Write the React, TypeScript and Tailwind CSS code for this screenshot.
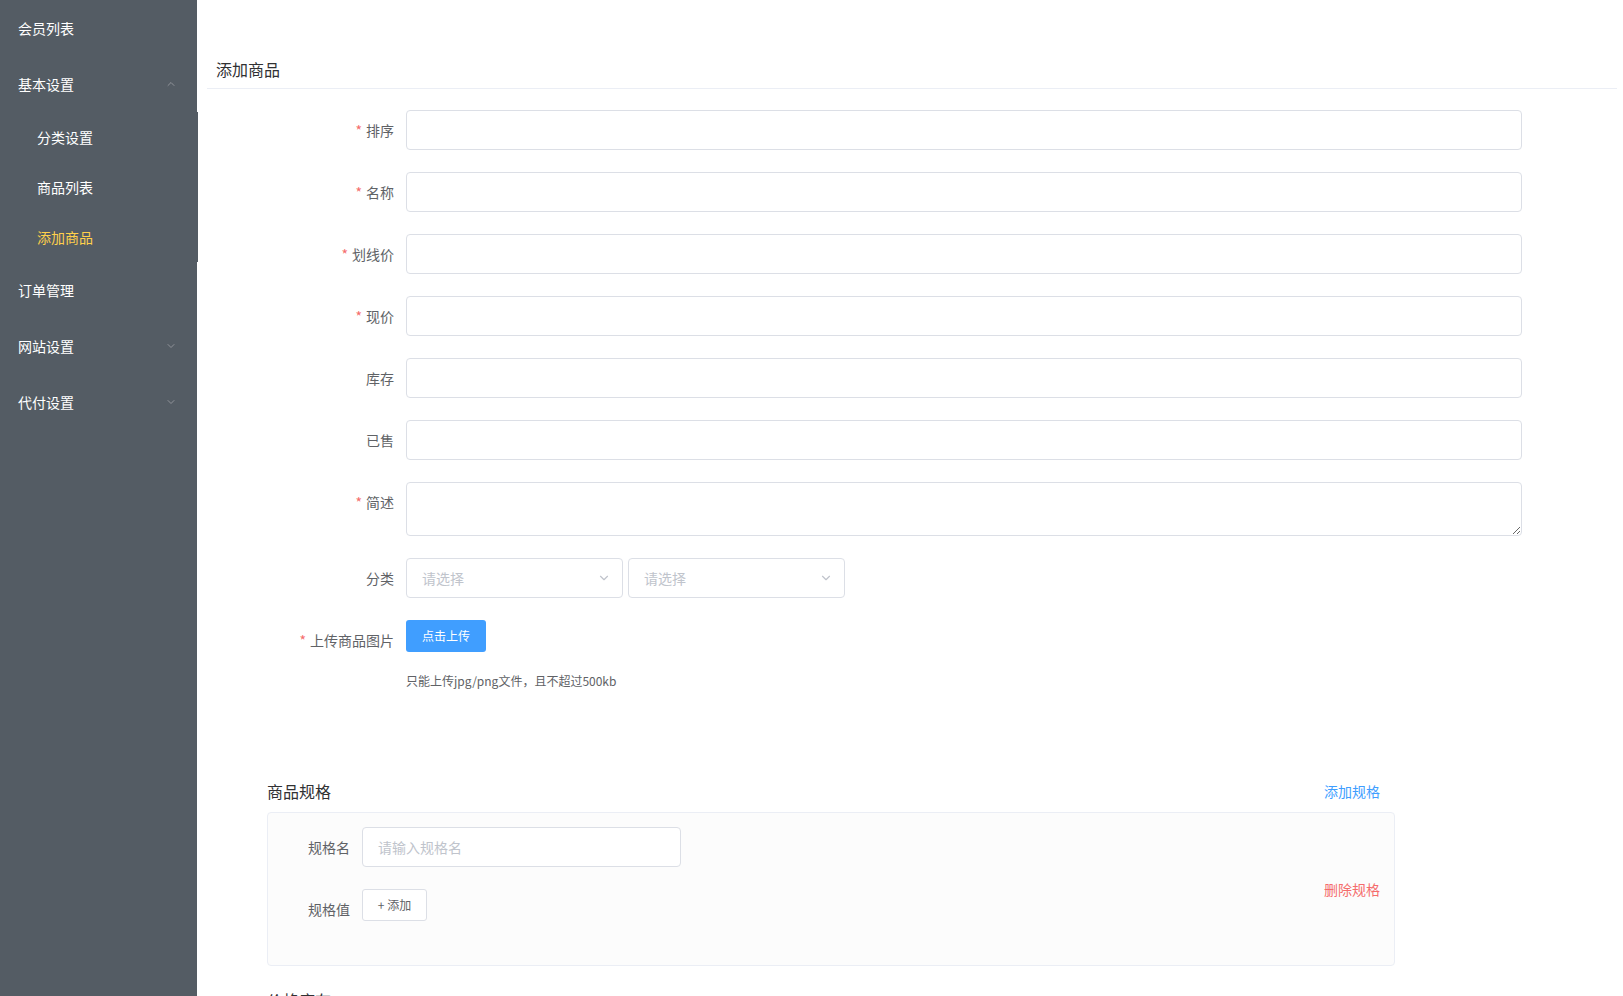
import { ChevronDown, ChevronUp } from 'lucide-react';

const font = { fontFamily: '"Microsoft YaHei", "Noto Sans CJK SC", "Noto Sans", sans-serif' };

function Sidebar() {
  const top = 'h-[56px] flex items-center justify-between pl-[18px] pr-[20px] text-[14px] text-white';
  const sub = 'h-[50px] flex items-center pl-[37px] text-[14px]';
  return (
    <aside className="w-[197px] shrink-0 bg-[#545c64] min-h-screen">
      <div className={top}>会员列表</div>
      <div className={top}>
        <span>基本设置</span>
        <ChevronUp size={12} className="text-[#909399]" />
      </div>
      <div className="bg-[#545c64] w-[198px]">
        <div className={sub + ' text-white'}>分类设置</div>
        <div className={sub + ' text-white'}>商品列表</div>
        <div className={sub + ' text-[#ffd04b]'}>添加商品</div>
      </div>
      <div className={top}>订单管理</div>
      <div className={top}>
        <span>网站设置</span>
        <ChevronDown size={12} className="text-[#909399]" />
      </div>
      <div className={top}>
        <span>代付设置</span>
        <ChevronDown size={12} className="text-[#909399]" />
      </div>
    </aside>
  );
}

function Label({ text, required }: { text: string; required?: boolean }) {
  return (
    <label className="w-[199px] shrink-0 pr-[12px] text-right text-[14px] leading-[40px] text-[#606266]">
      {required && <span className="text-[#f56c6c] mr-[4px]">*</span>}
      {text}
    </label>
  );
}

function Field({ label, required }: { label: string; required?: boolean }) {
  return (
    <div className="flex mb-[22px]">
      <Label text={label} required={required} />
      <input className="w-[1116px] h-[40px] border border-[#dcdfe6] rounded-[4px] px-[15px] text-[14px] outline-none bg-white" />
    </div>
  );
}

function Select() {
  return (
    <div className="w-[217px] h-[40px] border border-[#dcdfe6] rounded-[4px] flex items-center justify-between pl-[15px] pr-[11px] bg-white">
      <span className="text-[14px] text-[#c0c4cc]">请选择</span>
      <ChevronDown size={14} className="text-[#c0c4cc]" />
    </div>
  );
}

export default function App() {
  return (
    <div className="flex min-h-screen bg-white text-[#606266]" style={font}>
      <Sidebar />
      <main className="flex-1 pl-[10px] pr-[6px]">
        <div className="pt-[57px] pb-[7px] pl-[9px] border-b border-[#ebeef5] text-[16px] leading-[24px] text-[#303133]">
          添加商品
        </div>
        <form className="mt-[21px]">
          <Field label="排序" required />
          <Field label="名称" required />
          <Field label="划线价" required />
          <Field label="现价" required />
          <Field label="库存" />
          <Field label="已售" />
          <div className="flex mb-[22px]">
            <Label text="简述" required />
            <textarea
              rows={2}
              className="w-[1116px] h-[54px] border border-[#dcdfe6] rounded-[4px] px-[15px] py-[5px] text-[14px] leading-[21px] outline-none"
            />
          </div>
          <div className="flex mb-[22px]">
            <Label text="分类" />
            <div className="flex gap-[5px]">
              <Select />
              <Select />
            </div>
          </div>
          <div className="flex">
            <Label text="上传商品图片" required />
            <div>
              <button
                type="button"
                className="w-[80px] h-[32px] rounded-[3px] bg-[#409eff] text-white text-[12px]"
              >
                点击上传
              </button>
              <div className="mt-[19px] text-[12px] leading-[20px] text-[#606266]">
                只能上传jpg/png文件，且不超过500kb
              </div>
            </div>
          </div>
        </form>

        <section className="ml-[60px] w-[1128px] mt-[88px]">
          <div className="flex items-center justify-between pr-[15px] mb-[9px] h-[24px]">
            <h3 className="text-[16px] text-[#303133]">商品规格</h3>
            <span className="text-[14px] text-[#409eff]">添加规格</span>
          </div>
          <div className="border border-[#ebeef5] bg-[#fcfcfc] rounded-[4px] p-[14px] flex items-center justify-between">
            <div>
              <div className="flex mb-[22px]">
                <span className="w-[80px] pr-[12px] text-right text-[14px] leading-[40px] text-[#606266]">规格名</span>
                <div className="w-[319px] h-[40px] border border-[#dcdfe6] rounded-[4px] bg-white flex items-center pl-[15px] text-[14px] text-[#c0c4cc]">
                  请输入规格名
                </div>
              </div>
              <div className="flex mb-[22px] h-[40px]">
                <span className="w-[80px] pr-[12px] text-right text-[14px] leading-[40px] text-[#606266]">规格值</span>
                <button
                  type="button"
                  className="w-[65px] h-[32px] border border-[#dcdfe6] rounded-[3px] bg-white text-[12px] text-[#606266]"
                >
                  + 添加
                </button>
              </div>
            </div>
            <span className="text-[14px] text-[#f56c6c]">删除规格</span>
          </div>
          <h3 className="mt-[22px] text-[16px] leading-[24px] text-[#303133]">价格库存</h3>
        </section>
      </main>
    </div>
  );
}
